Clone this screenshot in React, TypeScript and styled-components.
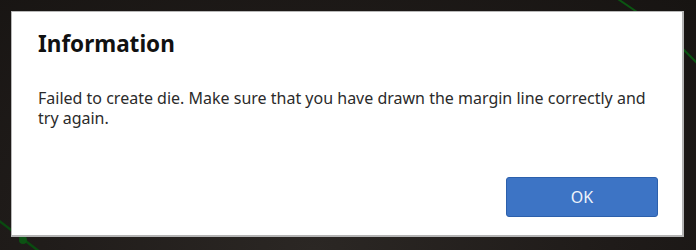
import React from "react";
import styled, { createGlobalStyle } from "styled-components";

const GlobalStyle = createGlobalStyle`
  html, body {
    margin: 0;
    padding: 0;
    width: 696px;
    height: 250px;
    overflow: hidden;
    background: #1d1917;
  }
  * { box-sizing: border-box; }
`;

const Screen = styled.div`
  position: relative;
  width: 696px;
  height: 250px;
  padding: 11px 0 0 11px;
  background: radial-gradient(ellipse at 45% 100%, #2b2724 0%, #1f1b19 55%, #171412 100%);
  font-family: "Noto Sans", "Open Sans", sans-serif;
  overflow: hidden;
`;

const Backdrop = styled.svg`
  position: absolute;
  left: 0;
  top: 0;
  width: 696px;
  height: 250px;
`;

const Dialog = styled.div`
  position: relative;
  width: 673px;
  height: 226px;
  background: #ffffff;
  border-top: 1px solid #b8b8b8;
  border-left: 1px solid #b8b8b8;
  border-right: 2px solid #b4b4b4;
  border-bottom: 2px solid #b4b4b4;
  display: flex;
  flex-direction: column;
  padding: 17px 24px 18px 26px;
`;

const Title = styled.h1`
  margin: 0;
  font-size: 22.5px;
  line-height: 30px;
  font-weight: 700;
  color: #111111;
`;

const Message = styled.p`
  margin: 29px 0 0 0;
  font-size: 16px;
  line-height: 20px;
  color: #2b2b2b;
  max-width: 625px;
`;

const Footer = styled.div`
  margin-top: auto;
  display: flex;
  justify-content: flex-end;
`;

const Button = styled.button`
  width: 152px;
  height: 40px;
  border-radius: 3px;
  border: 1px solid #2c60ac;
  background: #3d74c5;
  color: #eef3fb;
  font-family: "Noto Sans", "Open Sans", sans-serif;
  font-size: 16px;
  padding: 0;
  cursor: pointer;
`;

export default function App() {
  return (
    <>
      <GlobalStyle />
      <Screen>
        <Backdrop viewBox="0 0 696 250">
          <line x1="612" y1="-5" x2="640" y2="14" stroke="#0b5512" strokeWidth="2" />
          <line x1="676" y1="42" x2="700" y2="66" stroke="#0b5512" strokeWidth="2" />
          <line x1="-2" y1="220" x2="40" y2="252" stroke="#0a4a10" strokeWidth="2.5" />
          <circle cx="23" cy="240" r="4" fill="#0c5213" />
        </Backdrop>
        <Dialog>
          <Title>Information</Title>
          <Message>
            Failed to create die. Make sure that you have drawn the margin line correctly and try again.
          </Message>
          <Footer>
            <Button>OK</Button>
          </Footer>
        </Dialog>
      </Screen>
    </>
  );
}
